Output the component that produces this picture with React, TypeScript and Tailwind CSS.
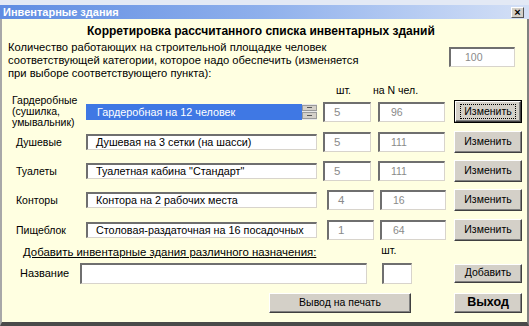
const sunken =
  "bg-white border-t-2 border-l-2 border-t-[#6f6f6f] border-l-[#6f6f6f] border-b border-r border-b-[#d8d4cc] border-r-[#d8d4cc]"
const raised =
  "bg-[#d4d0c8] border border-t-white border-l-white border-b-[#404040] border-r-[#404040] shadow-[inset_-1px_-1px_0_#808080]"

type RowProps = {
  label: React.ReactNode
  value: string
  count: string
  people: string
  rowH: string
  labelPad: string
  shifted?: boolean
  selected?: boolean
  focused?: boolean
}

const Row = ({ label, value, count, people, rowH, labelPad, shifted, selected, focused }: RowProps) => {
  return (
    <div className={`flex items-center ${rowH}`}>
      <div className={`w-[84px] shrink-0 leading-[11px] text-[10.5px] ${labelPad}`}>{label}</div>
      {selected ? (
        <div className="flex w-[231px] h-[16px] shrink-0 bg-[#3f78e4]">
          <div className="flex-1 pl-[11px] text-white text-[10.8px] leading-[16px] whitespace-nowrap overflow-hidden">
            {value}
          </div>
          <div className="w-[15px] flex flex-col gap-[1px] py-[1px] bg-[#e8e8e8]">
            <div className="flex-1 bg-[#d4d0c8] border border-[#9a9a9a] flex items-center justify-center">
              <div className="w-[5px] h-[1px] bg-[#555]" />
            </div>
            <div className="flex-1 bg-[#d4d0c8] border border-[#9a9a9a] flex items-center justify-center">
              <div className="w-[5px] h-[1px] bg-[#555]" />
            </div>
          </div>
        </div>
      ) : (
        <div className={`w-[231px] h-[16px] shrink-0 ${sunken} pl-[8px] text-[10.8px] leading-[12px] whitespace-nowrap overflow-hidden text-clip`}>
          {value}
        </div>
      )}
      <div
        className={`${shifted ? "ml-[10px] w-[47px]" : "ml-[6px] w-[48px]"} h-[20px] shrink-0 ${sunken} pl-[9px] text-[11.5px] leading-[17px] text-[#8a8a8a]`}
      >
        {count}
      </div>
      <div
        className={`${shifted ? "ml-[6px] w-[66px]" : "ml-[7px] w-[67px]"} h-[20px] shrink-0 ${sunken} pl-[11px] text-[10.5px] leading-[17px] text-[#8a8a8a]`}
      >
        {people}
      </div>
      <div className={`${shifted ? "ml-[8px]" : "ml-[9px]"} shrink-0`}>
        {focused ? (
          <div className="w-[68px] h-[23px] border border-black">
            <div className={`w-full h-full ${raised} flex items-center justify-center`}>
              <span className="px-[3px] border border-dotted border-black text-[10.5px] leading-[13px]">
                Изменить
              </span>
            </div>
          </div>
        ) : (
          <div className={`w-[68px] h-[22px] ${raised} flex items-center justify-center text-[10.5px]`}>
            Изменить
          </div>
        )}
      </div>
    </div>
  )
}

export default function App() {
  return (
    <div className="w-[529px] h-[326px] flex flex-col font-['Liberation_Sans',Arial,sans-serif] text-black overflow-hidden">
      {/* title bar */}
      <div className="h-[19px] shrink-0 flex flex-col">
        <div className="h-[5px] bg-[#e3e9f5]" />
        <div className="flex-1 flex items-center justify-between bg-linear-to-r from-[#5f8ce2] via-[#8fb0ec] to-[#d4e0f6] pl-[3px] pr-[5px]">
          <span className="text-white text-[11px] font-bold leading-[14px]">Инвентарные здания</span>
          <div className="w-[13px] h-[11px] bg-[#d4d0c8] border border-t-white border-l-white border-b-[#555] border-r-[#555] flex items-center justify-center text-[11px] font-bold leading-none">
            ×
          </div>
        </div>
      </div>

      {/* body */}
      <div className="flex-1 flex flex-col bg-[#ffffe1] border-l-2 border-l-[#a8a8a8] border-r-2 border-r-[#808080] border-b-4 border-b-[#4a4a4a]">
        <div className="mt-[5px] h-[14px] pl-[85px] text-[12px] font-bold leading-[14px] whitespace-nowrap">
          Корретировка рассчитанного списка инвентарных зданий
        </div>

        <div className="mt-[3px] flex">
          <div className="pl-[6px] text-[11.2px] leading-[13px] whitespace-nowrap">
            Количество работающих на строительной площадке человек
            <br />
            соответствующей категории, которое надо обеспечить (изменяется
            <br />
            при выборе соответствующего пункта):
          </div>
          <div className={`ml-auto mr-[12px] mt-[6px] w-[66px] h-[20px] ${sunken} pl-[14px] text-[10.5px] leading-[17px] text-[#8a8a8a]`}>
            100
          </div>
        </div>

        <div className="h-[16px] flex items-end text-[10.5px] leading-[12px]">
          <span className="ml-[334px]">шт.</span>
          <span className="ml-[22px]">на N чел.</span>
        </div>

        <Row
          rowH="h-[31px]"
          labelPad="pl-[10px]"
          label={
            <>
              Гардеробные
              <br />
              (сушилка,
              <br />
              умывальник)
            </>
          }
          value="Гардеробная на 12 человек"
          count="5"
          people="96"
          selected
          focused
        />
        <Row rowH="h-[30px]" labelPad="pl-[14px]" label="Душевые" value="Душевая на 3 сетки (на шасси)" count="5" people="111" />
        <Row rowH="h-[28px]" labelPad="pl-[14px]" label="Туалеты" value='Туалетная кабина "Стандарт"' count="5" people="111" />
        <Row rowH="h-[30px]" labelPad="pl-[14px]" label="Конторы" value="Контора на 2 рабочих места" count="4" people="16" shifted />
        <Row
          rowH="h-[30px]"
          labelPad="pl-[14px]"
          label="Пищеблок"
          value="Столовая-раздаточная на 16 посадочных"
          count="1"
          people="64"
          shifted
        />

        <div className="h-[14px] flex items-center text-[11.4px] leading-[13px]">
          <span className="ml-[21px] underline whitespace-nowrap">Добавить инвентарные здания различного назначения:</span>
          <span className="ml-[65px] -mt-[3px] text-[10.5px]">шт.</span>
        </div>

        <div className="h-[28px] flex items-center">
          <span className="ml-[18px] w-[60px] text-[11px]">Название</span>
          <div className={`w-[287px] h-[21px] ${sunken}`} />
          <div className={`ml-[15px] w-[30px] h-[21px] ${sunken}`} />
          <div className={`ml-[42px] w-[68px] h-[19px] ${raised} flex items-center justify-center text-[10.5px]`}>
            Добавить
          </div>
        </div>

        <div className="h-[31px] flex items-center">
          <div className={`ml-[267px] w-[142px] h-[20px] ${raised} flex items-center justify-center text-[10.5px]`}>
            Вывод на печать
          </div>
          <div className={`ml-[43px] w-[68px] h-[20px] ${raised} flex items-center justify-center text-[12.5px] font-bold`}>
            Выход
          </div>
        </div>
      </div>
    </div>
  )
}
